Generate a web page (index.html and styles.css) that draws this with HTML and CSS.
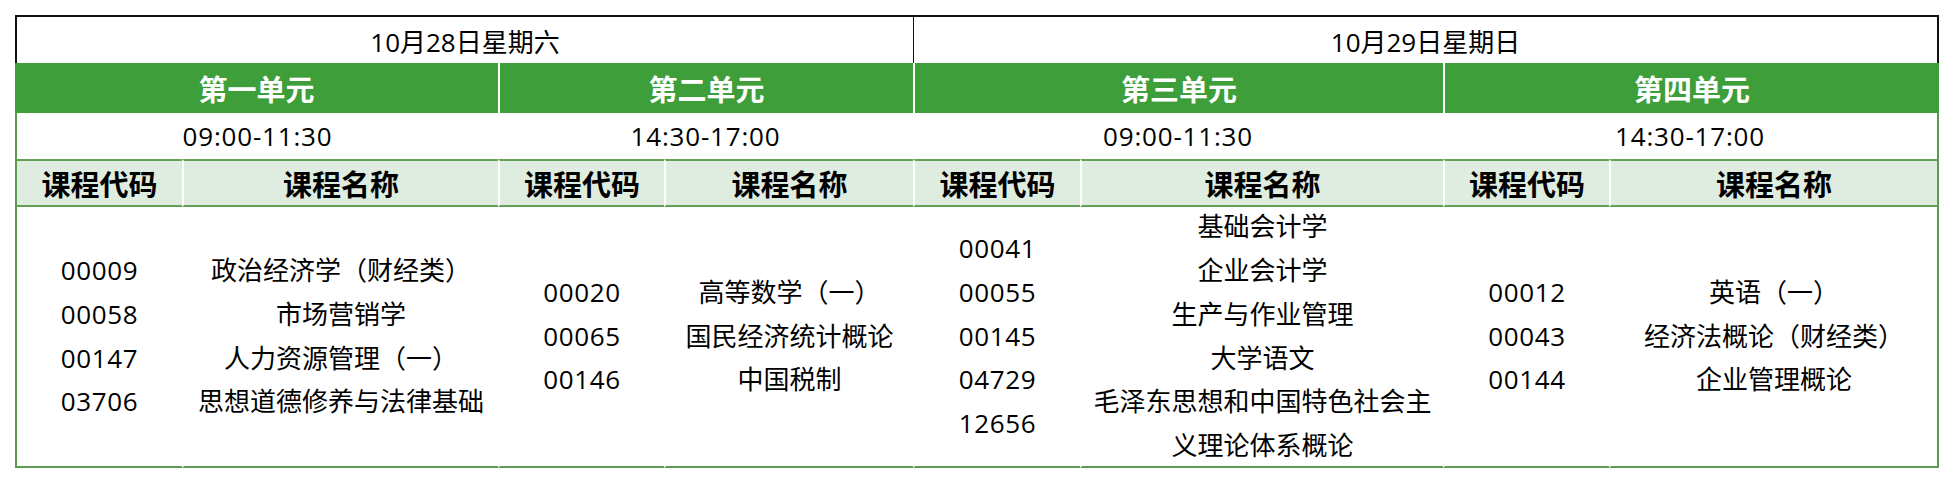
FILE: index.html
```html
<!DOCTYPE html>
<html lang="zh-CN">
<head>
<meta charset="utf-8">
<title>考试安排</title>
<link rel="stylesheet" href="styles.css">
</head>
<body>
<div class="sheet">
  <div class="cell date first span4">10月28日星期六</div>
  <div class="cell date last span4 divider-black">10月29日星期日</div>

  <div class="cell unit first span2">第一单元</div>
  <div class="cell unit span2 divider">第二单元</div>
  <div class="cell unit span2 divider">第三单元</div>
  <div class="cell unit last span2 divider">第四单元</div>

  <div class="cell time first span2">09:00-11:30</div>
  <div class="cell time span2">14:30-17:00</div>
  <div class="cell time span2">09:00-11:30</div>
  <div class="cell time last span2">14:30-17:00</div>

  <div class="cell head first">课程代码</div>
  <div class="cell head divider">课程名称</div>
  <div class="cell head divider">课程代码</div>
  <div class="cell head divider">课程名称</div>
  <div class="cell head divider">课程代码</div>
  <div class="cell head divider">课程名称</div>
  <div class="cell head divider">课程代码</div>
  <div class="cell head last divider">课程名称</div>

  <div class="cell body code first">00009<br>00058<br>00147<br>03706</div>
  <div class="cell body divider">政治经济学（财经类）<br>市场营销学<br>人力资源管理（一）<br>思想道德修养与法律基础</div>
  <div class="cell body code divider">00020<br>00065<br>00146</div>
  <div class="cell body divider">高等数学（一）<br>国民经济统计概论<br>中国税制</div>
  <div class="cell body code divider">00041<br>00055<br>00145<br>04729<br>12656</div>
  <div class="cell body divider">基础会计学<br>企业会计学<br>生产与作业管理<br>大学语文<br>毛泽东思想和中国特色社会主<br>义理论体系概论</div>
  <div class="cell body code divider">00012<br>00043<br>00144</div>
  <div class="cell body last divider">英语（一）<br>经济法概论（财经类）<br>企业管理概论</div>
</div>
</body>
</html>
```

FILE: styles.css
```css
html, body {
  margin: 0;
  padding: 0;
  background: #ffffff;
}

body {
  padding: 15px 0 0 15px;
  font-family: "Open Sans", "Noto Sans CJK SC", sans-serif;
  color: #000000;
}

.sheet {
  display: grid;
  grid-template-columns: 167px 316px 166px 249px 167px 363px 166px 330px;
  grid-template-rows: 48px 50px 46px 48px 261px;
  width: 1924px;
}

.cell {
  box-sizing: border-box;
  display: flex;
  align-items: center;
  justify-content: center;
  text-align: center;
  font-size: 26px;
  white-space: nowrap;
}

.span2 { grid-column: span 2; }
.span4 { grid-column: span 4; }

/* date row */
.date {
  border-top: 2px solid #111111;
  font-size: 26px;
  padding-top: 2px;
}
.date.first { border-left: 2px solid #111111; }
.date.last { border-right: 2px solid #111111; }
.date.divider-black { border-left: 1px solid #111111; }

/* unit row */
.unit {
  background: #3d9e3a;
  color: #ffffff;
  font-weight: 700;
  font-size: 29px;
}
.unit.divider { border-left: 2px solid #ffffff; }

/* time row */
.time {
  background: #ffffff;
  letter-spacing: 0.8px;
}
.time.first { border-left: 2px solid #5b9a50; }
.time.last { border-right: 2px solid #5b9a50; }

/* header row */
.head {
  background: #dfece0;
  border-top: 2px solid #62a056;
  border-bottom: 2px solid #62a056;
  font-weight: 700;
  font-size: 29px;
}
.head.divider { border-left: 2px solid #ffffff; }
.head.first { border-left: 2px solid #5b9a50; }
.head.last { border-right: 2px solid #5b9a50; }

/* body row */
.body {
  background: #ffffff;
  border-bottom: 2px solid #5b9a50;
  line-height: 43.9px;
}
.body.code { letter-spacing: 0.6px; }
.body.divider { border-left: 2px solid #ffffff; }
.body.first { border-left: 2px solid #5b9a50; }
.body.last { border-right: 2px solid #5b9a50; }
```
